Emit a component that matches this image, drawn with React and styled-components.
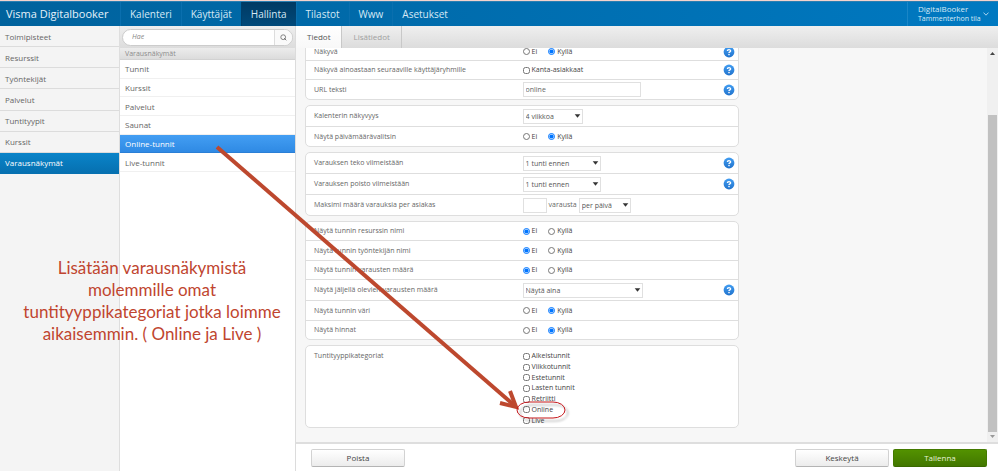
import React, { useLayoutEffect, useRef } from "react";
import styled, { createGlobalStyle } from "styled-components";

const GlobalStyle = createGlobalStyle`
  *, *::before, *::after { box-sizing: border-box; }
  html, body { margin: 0; height: 100%; }
  body {
    font-family: "Open Sans", "Noto Sans", sans-serif;
    font-size: 7px;
    line-height: 10px;
    color: #666;
    background: #fff;
  }
  button, input, select { font: inherit; color: inherit; margin: 0; }
  a { color: inherit; text-decoration: none; }
`;

const Page = styled.div`
  position: relative;
  display: flex;
  flex-direction: column;
  height: 100vh;
  overflow: hidden;
  border-top: 1px solid #f4d3cd;
`;

const Header = styled.header`
  display: flex;
  flex: none;
  height: 25px;
  color: #d6e9f5;
  background: linear-gradient(90deg, #00629d, #0079c1);
  border-top: 1px solid #2a7fb2;
`;

const Brand = styled.a`
  display: flex;
  align-items: center;
  width: 120px;
  padding-left: 6px;
  font-size: 11px;
  color: #e6f2fa;
  white-space: nowrap;
`;

const Nav = styled.nav`
  display: flex;
  flex: 1;
`;

const NavLink = styled.a`
  display: flex;
  align-items: center;
  padding: 0 9px;
  font-size: 10px;
  border-left: 1px solid ${(p) => (p.$active ? "#003f6b" : "#0a6fae")};
  background: ${(p) => (p.$active ? "linear-gradient(#003a63, #00497a)" : "none")};
`;

const Account = styled.button`
  display: flex;
  align-items: center;
  gap: 2px;
  width: 91px;
  padding: 0 8px 0 10px;
  text-align: left;
  line-height: 10px;
  white-space: nowrap;
  color: #d6e9f5;
  background: none;
  border: 0;
  border-left: 1px solid #1a86c7;
  svg { flex: none; }
`;

const AccountText = styled.span`
  display: flex;
  flex-direction: column;
`;

const AccountName = styled.span`
  font-size: 8px;
`;

const Body = styled.div`
  display: flex;
  flex: 1;
  min-height: 0;
`;

const Sidebar = styled.nav`
  flex: none;
  width: 120px;
  background: #f4f4f4;
  border-right: 1px solid #dedede;
`;

const SideList = styled.ul`
  display: grid;
  grid-auto-rows: 1fr;
  height: 148px;
  margin: 0;
  padding: 0;
  list-style: none;
`;

const SideLink = styled.a`
  display: flex;
  align-items: center;
  height: 100%;
  padding: 1px 0 0 5px;
  font-size: 8px;
  color: ${(p) => (p.$active ? "#fff" : "#666")};
  background: ${(p) => (p.$active ? "linear-gradient(#0a84c9, #0670b0)" : "none")};
  border-bottom: 1px solid ${(p) => (p.$active ? "#0670b0" : "#dcdcdc")};
`;

const ListColumn = styled.section`
  flex: none;
  width: 176px;
  background: #fff;
  border-right: 1px solid #dcdcdc;
`;

const SearchBar = styled.form`
  display: flex;
  align-items: center;
  height: 22px;
  padding: 0 2px;
  background: linear-gradient(#eee, #dcdcdc);
`;

const SearchField = styled.div`
  display: flex;
  flex: 1;
  height: 17px;
  overflow: hidden;
  background: #fff;
  border: 1px solid #ccc;
  border-radius: 9px;
`;

const SearchInput = styled.input`
  flex: 1;
  min-width: 0;
  padding: 0 9px;
  font-style: italic;
  background: none;
  border: 0;
  outline: 0;
  &::placeholder { color: #888; opacity: 1; }
`;

const SearchButton = styled.button`
  display: flex;
  align-items: center;
  justify-content: center;
  width: 18px;
  padding: 0;
  background: #fafafa;
  border: 0;
  border-left: 1px solid #ddd;
`;

const ListTitle = styled.h2`
  margin: 0;
  height: 12px;
  padding-left: 5px;
  font-size: 7px;
  font-weight: 400;
  line-height: 11px;
  color: #8c8c8c;
  background: linear-gradient(#ececec, #dcdcdc);
  border-bottom: 1px solid #d2d2d2;
`;

const ViewList = styled.ul`
  display: grid;
  grid-auto-rows: 1fr;
  height: 112px;
  margin: 0;
  padding: 0;
  list-style: none;
`;

const ViewLink = styled.a`
  display: flex;
  align-items: center;
  height: 100%;
  padding: 1px 0 0 5px;
  font-size: 8px;
  color: ${(p) => (p.$active ? "#fff" : "#666")};
  background: ${(p) => (p.$active ? "linear-gradient(#439ef3, #2f8ae4)" : "none")};
  border-bottom: 1px solid ${(p) => (p.$active ? "#2a7fd6" : "#f0f0f0")};
`;

const Main = styled.main`
  display: flex;
  flex: 1;
  flex-direction: column;
  min-width: 0;
`;

const Tabs = styled.div`
  display: flex;
  flex: none;
  height: 22px;
  background: linear-gradient(#efefef, #dcdcdc);
`;

const Tab = styled.button`
  padding: 0 11px;
  font-size: 8px;
  color: ${(p) => (p.$active ? "#555" : "#a0a0a0")};
  background: ${(p) => (p.$active ? "linear-gradient(#fff, #f8f8f8)" : "none")};
  border: 0;
  border-right: 1px solid #c8c8c8;
`;

const Viewport = styled.div`
  display: flex;
  flex: 1;
  min-height: 0;
  background: #f7f7f7;
`;

const Scroller = styled.div`
  flex: 1;
  padding: 0 9px 14px;
  overflow-y: auto;
  scrollbar-width: none;
`;

const Form = styled.form`
  display: flex;
  flex-direction: column;
  gap: 5px;
  max-width: 434px;
`;

const Panel = styled.section`
  background: #fff;
  border: 1px solid #dedede;
  border-radius: 5px;
`;

const Row = styled.div`
  display: grid;
  grid-template-columns: minmax(0, 51fr) minmax(0, 49fr) 15px;
  align-items: ${(p) => (p.$top ? "start" : "center")};
  height: ${(p) => (p.$height ? p.$height + "px" : "auto")};
  padding: ${(p) => (p.$top ? "5px" : "0")} 0 ${(p) => (p.$top ? "1px" : "0")} 8px;
  border-bottom: 1px solid #dedede;
  &:last-child { border-bottom: 0; }
`;

const Label = styled.span`
  white-space: nowrap;
`;

const Controls = styled.div`
  display: flex;
  align-items: center;
  gap: ${(p) => p.$gap || 0}px;
`;

const CheckList = styled.div`
  display: grid;
  grid-auto-rows: 1fr;
  height: 75px;
`;

const Choice = styled.label`
  display: flex;
  align-items: center;
  gap: 2px;
  color: #444;
  white-space: nowrap;
`;

const Radio = styled.input`
  width: 7px;
  height: 7px;
`;

const Checkbox = styled.input`
  width: 7px;
  height: 7px;
`;

const TextInput = styled.input`
  width: ${(p) => p.$width}px;
  height: 15px;
  padding: 0 2px;
  background: #fff;
  border: 1px solid #e0e0e0;
`;

const SelectBox = styled.span`
  position: relative;
  display: inline-flex;
  width: ${(p) => p.$width}px;
  color: #555;
  svg {
    position: absolute;
    top: 5px;
    right: 2px;
    pointer-events: none;
  }
`;

const SelectInput = styled.select`
  appearance: none;
  width: 100%;
  height: 15px;
  padding: 1px 2px 0;
  background: #fff;
  border: 1px solid #e0e0e0;
  border-radius: 0;
`;

const HelpButton = styled.button`
  display: flex;
  padding: 0;
  background: none;
  border: 0;
`;

const ScrollRail = styled.div`
  display: flex;
  flex: none;
  flex-direction: column;
  align-items: center;
  gap: 56px;
  width: 11px;
  padding-top: 3px;
  background: #f0f0f0;
`;

const ScrollThumb = styled.div`
  flex: 1;
  width: 9px;
  background: #c1c1c1;
`;

const ScrollLower = styled.div`
  display: flex;
  flex: 1;
  flex-direction: column;
  align-items: center;
  gap: 3px;
  padding-bottom: 4px;
`;

const Footer = styled.footer`
  display: flex;
  flex: none;
  align-items: center;
  gap: 4px;
  height: 29px;
  padding: 0 11px 0 15px;
  border-top: 2px solid #dedede;
`;

const Spacer = styled.div`
  flex: 1;
`;

const ActionButton = styled.button`
  width: 94px;
  height: 18px;
  padding: 0;
  font-size: 8px;
  color: ${(p) => (p.$primary ? "#e6f3d8" : "#444")};
  background: ${(p) => (p.$primary ? "linear-gradient(#539200, #427700)" : "linear-gradient(#fff, #ececec)")};
  border: 1px solid ${(p) => (p.$primary ? "#447a00" : "#d2d2d2")};
  border-bottom-color: ${(p) => (p.$primary ? "#3a6900" : "#b4b4b4")};
  border-radius: 2px;
`;

const Annotations = styled.svg`
  position: absolute;
  top: -1px;
  left: 0;
  width: 998px;
  height: 471px;
  pointer-events: none;
`;

const Note = styled.p`
  position: absolute;
  top: 256px;
  left: 12px;
  width: 280px;
  margin: 0;
  font-family: "Kristen ITC", "Lato", sans-serif;
  font-size: 17px;
  line-height: 22px;
  text-align: center;
  white-space: pre-line;
  color: #c0452f;
  pointer-events: none;
`;

function Arrow() {
  return (
    <svg width="7" height="4" viewBox="0 0 7 4" aria-hidden="true">
      <path d="M0.7 0.3h5.6L3.5 3.8z" fill="#333" />
    </svg>
  );
}

function Help() {
  return (
    <HelpButton type="button" aria-label="Ohje">
      <svg width="12" height="12" viewBox="0 0 12 12" aria-hidden="true">
        <defs>
          <linearGradient id="help" x1="0" y1="0" x2="0" y2="1">
            <stop offset="0" stopColor="#419df2" />
            <stop offset="1" stopColor="#2173cc" />
          </linearGradient>
        </defs>
        <circle cx="6" cy="6" r="5.4" fill="url(#help)" />
        <path d="M4.4 4.9C4.4 3.3 7.6 3.2 7.6 4.9C7.6 5.9 6 5.8 6 7" fill="none" stroke="#fff" strokeWidth="1.4" />
        <circle cx="6" cy="8.6" r="0.8" fill="#fff" />
      </svg>
    </HelpButton>
  );
}

function Select({ label, value, width }) {
  return (
    <SelectBox $width={width}>
      <SelectInput aria-label={label} defaultValue={value}>
        <option>{value}</option>
      </SelectInput>
      <Arrow />
    </SelectBox>
  );
}

function YesNo({ name, yes }) {
  return (
    <Controls $gap={11} role="radiogroup" aria-label={name}>
      <Choice><Radio type="radio" name={name} defaultChecked={!yes} />Ei</Choice>
      <Choice><Radio type="radio" name={name} defaultChecked={yes} />Kyllä</Choice>
    </Controls>
  );
}

function Field({ label, height, help, children }) {
  return (
    <Row $height={height}>
      <Label>{label}</Label>
      {children}
      {help && <Help />}
    </Row>
  );
}

const NAV = ["Kalenteri", "Käyttäjät", "Hallinta", "Tilastot", "Www", "Asetukset"];
const SIDE = ["Toimipisteet", "Resurssit", "Työntekijät", "Palvelut", "Tuntityypit", "Kurssit", "Varausnäkymät"];
const VIEWS = ["Tunnit", "Kurssit", "Palvelut", "Saunat", "Online-tunnit", "Live-tunnit"];
const CATEGORIES = ["Alkeistunnit", "Viikkotunnit", "Estetunnit", "Lasten tunnit", "Retriitti", "Online", "Live"];

function YesNoField({ label, yes, height, help }) {
  return (
    <Field label={label} height={height} help={help}>
      <YesNo name={label} yes={yes} />
    </Field>
  );
}

function SelectField({ label, value, width, height, help }) {
  return (
    <Field label={label} height={height} help={help}>
      <Select label={label} value={value} width={width} />
    </Field>
  );
}

export default function App() {
  const scroller = useRef(null);
  useLayoutEffect(() => {
    scroller.current.scrollTop = scroller.current.scrollHeight;
  }, []);

  return (
    <>
      <GlobalStyle />
      <Page>
        <Header>
          <Brand href="#">Visma Digitalbooker</Brand>
          <Nav>
            {NAV.map((item) => (
              <NavLink key={item} href="#" $active={item === "Hallinta"}>{item}</NavLink>
            ))}
          </Nav>
          <Account type="button">
            <AccountText>
              <AccountName>DigitalBooker</AccountName>
              <span>Tammenterhon tila</span>
            </AccountText>
            <svg width="6" height="4" viewBox="0 0 6 4" aria-hidden="true">
              <path d="M0.5 0.6L3 3.2L5.5 0.6" fill="none" stroke="#b9dcf3" strokeWidth="0.9" />
            </svg>
          </Account>
        </Header>
        <Body>
          <Sidebar>
            <SideList>
              {SIDE.map((item) => (
                <li key={item}>
                  <SideLink href="#" $active={item === "Varausnäkymät"}>{item}</SideLink>
                </li>
              ))}
            </SideList>
          </Sidebar>
          <ListColumn>
            <SearchBar>
              <SearchField>
                <SearchInput type="text" placeholder="Hae" aria-label="Hae" />
                <SearchButton type="button" aria-label="Etsi">
                  <svg width="7" height="7" viewBox="0 0 7 7" aria-hidden="true">
                    <circle cx="3.2" cy="3.2" r="2.4" fill="none" stroke="#777" strokeWidth="0.9" />
                    <path d="M4 4L6.3 6.3" stroke="#777" strokeWidth="1" />
                  </svg>
                </SearchButton>
              </SearchField>
            </SearchBar>
            <ListTitle>Varausnäkymät</ListTitle>
            <ViewList>
              {VIEWS.map((item) => (
                <li key={item}>
                  <ViewLink href="#" $active={item === "Online-tunnit"}>{item}</ViewLink>
                </li>
              ))}
            </ViewList>
          </ListColumn>
          <Main>
            <Tabs role="tablist">
              <Tab type="button" role="tab" aria-selected="true" $active>Tiedot</Tab>
              <Tab type="button" role="tab" aria-selected="false">Lisätiedot</Tab>
            </Tabs>
            <Viewport>
              <Scroller ref={scroller}>
                <Form>
                  <Panel>
                    <YesNoField label="Näkyvä" yes height={18} help />
                    <Field label="Näkyvä ainoastaan seuraaville käyttäjäryhmille" height={19} help>
                      <Choice><Checkbox type="checkbox" />Kanta-asiakkaat</Choice>
                    </Field>
                    <Field label="URL teksti" height={19} help>
                      <TextInput type="text" aria-label="URL teksti" defaultValue="online" $width={118} />
                    </Field>
                  </Panel>
                  <Panel>
                    <SelectField label="Kalenterin näkyvyys" value="4 viikkoa" width={60} height={21} />
                    <YesNoField label="Näytä päivämäärävalitsin" yes height={19} />
                  </Panel>
                  <Panel>
                    <SelectField label="Varauksen teko viimeistään" value="1 tunti ennen" width={78} height={21} help />
                    <SelectField label="Varauksen poisto viimeistään" value="1 tunti ennen" width={78} height={21} help />
                    <Field label="Maksimi määrä varauksia per asiakas" height={20}>
                      <Controls $gap={2}>
                        <TextInput type="text" aria-label="Maksimi määrä varauksia per asiakas" $width={24} />
                        <span>varausta</span>
                        <Select label="Ajanjakso" value="per päivä" width={52} />
                      </Controls>
                    </Field>
                  </Panel>
                  <Panel>
                    <YesNoField label="Näytä tunnin resurssin nimi" height={19} />
                    <YesNoField label="Näytä tunnin työntekijän nimi" height={20} />
                    <YesNoField label="Näytä tunnin varausten määrä" height={19} />
                    <SelectField label="Näytä jäljellä olevien varausten määrä" value="Näytä aina" width={120} height={21} help />
                    <YesNoField label="Näytä tunnin väri" yes height={20} />
                    <YesNoField label="Näytä hinnat" yes height={18} />
                  </Panel>
                  <Panel>
                    <Row $top>
                      <Label>Tuntityyppikategoriat</Label>
                      <CheckList>
                        {CATEGORIES.map((item) => (
                          <Choice key={item}><Checkbox type="checkbox" />{item}</Choice>
                        ))}
                      </CheckList>
                    </Row>
                  </Panel>
                </Form>
              </Scroller>
              <ScrollRail aria-hidden="true">
                <svg width="5" height="8" viewBox="0 0 5 8"><path d="M0 4L2.5 1L5 4z" fill="#444" /></svg>
                <ScrollLower>
                  <ScrollThumb />
                  <svg width="5" height="3" viewBox="0 0 5 3"><path d="M0 0h5L2.5 3z" fill="#999" /></svg>
                </ScrollLower>
              </ScrollRail>
            </Viewport>
            <Footer>
              <ActionButton type="button">Poista</ActionButton>
              <Spacer />
              <ActionButton type="button">Keskeytä</ActionButton>
              <ActionButton type="button" $primary>Tallenna</ActionButton>
            </Footer>
          </Main>
        </Body>
        <Note>{"Lisätään varausnäkymistä\nmolemmille omat\ntuntityyppikategoriat jotka loimme\naikaisemmin. ( Online ja Live )"}</Note>
        <Annotations viewBox="0 0 998 471" aria-hidden="true">
          <defs>
            <filter id="soft" x="-20%" y="-50%" width="150%" height="220%">
              <feDropShadow dx="3" dy="3" stdDeviation="1" floodColor="#000" floodOpacity="0.35" />
            </filter>
          </defs>
          <g fill="none" stroke="#bd482e">
            <path d="M217 147L515 406" strokeWidth="4" />
            <path d="M510 391L516 407L500 403" strokeWidth="4" />
          </g>
          <rect x="517" y="402" width="48" height="16" rx="12" ry="8" fill="none" stroke="#c4161c" filter="url(#soft)" />
        </Annotations>
      </Page>
    </>
  );
}
